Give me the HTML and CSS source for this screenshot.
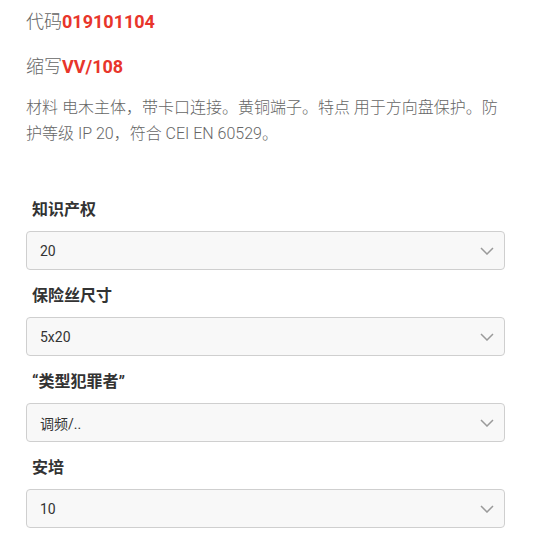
FILE: index.html
```html
<!DOCTYPE html>
<html lang="zh">
<head>
<meta charset="utf-8">
<link rel="stylesheet" href="styles.css">
</head>
<body>
<div class="page">
  <p class="meta">代码<strong class="hl">019101104</strong></p>
  <p class="meta second">缩写<strong class="hl">VV/108</strong></p>
  <p class="desc">材料 电木主体，带卡口连接。黄铜端子。特点 用于方向盘保护。防护等级 IP 20，符合 CEI EN 60529。</p>

  <div class="fields">
    <div class="field">
      <div class="label">知识产权</div>
      <div class="select"><span>20</span><svg class="chev" width="14" height="8" viewBox="0 0 14 8"><polyline points="1,1 7,7 13,1" fill="none" stroke="#9a9a9a" stroke-width="1.5"/></svg></div>
    </div>
    <div class="field">
      <div class="label">保险丝尺寸</div>
      <div class="select"><span>5x20</span><svg class="chev" width="14" height="8" viewBox="0 0 14 8"><polyline points="1,1 7,7 13,1" fill="none" stroke="#9a9a9a" stroke-width="1.5"/></svg></div>
    </div>
    <div class="field">
      <div class="label">“类型犯罪者”</div>
      <div class="select"><span>调频/..</span><svg class="chev" width="14" height="8" viewBox="0 0 14 8"><polyline points="1,1 7,7 13,1" fill="none" stroke="#9a9a9a" stroke-width="1.5"/></svg></div>
    </div>
    <div class="field">
      <div class="label">安培</div>
      <div class="select"><span>10</span><svg class="chev" width="14" height="8" viewBox="0 0 14 8"><polyline points="1,1 7,7 13,1" fill="none" stroke="#9a9a9a" stroke-width="1.5"/></svg></div>
    </div>
  </div>
</div>
</body>
</html>
```

FILE: styles.css
```css
html, body {
  margin: 0;
  padding: 0;
  background: #ffffff;
}

body {
  font-family: Roboto, "Noto Sans CJK SC", sans-serif;
  color: #333;
}

.page {
  padding: 11px 31px 0 26px;
}

.meta {
  margin: 0;
  font-size: 18px;
  line-height: 22px;
  font-weight: 300;
  color: #666;
}

.meta.second {
  margin-top: 23px;
}

.hl {
  color: #e8352b;
  font-weight: 700;
}

.desc {
  margin: 17px 0 0;
  font-size: 16px;
  line-height: 26px;
  font-weight: 300;
  color: #666;
}

.fields {
  margin-top: 53px;
  display: flex;
  flex-direction: column;
  gap: 16px;
}

.label {
  padding-left: 6px;
  font-size: 16px;
  line-height: 20px;
  font-weight: 700;
  color: #333;
  margin-bottom: 11px;
}

.select {
  height: 39px;
  box-sizing: border-box;
  border: 1px solid #cfcfcf;
  border-radius: 4px;
  background: #f8f8f8;
  display: flex;
  align-items: center;
  justify-content: space-between;
  padding: 0 10px 0 13px;
  font-size: 14px;
  color: #333;
}

.chev {
  display: block;
}
```
